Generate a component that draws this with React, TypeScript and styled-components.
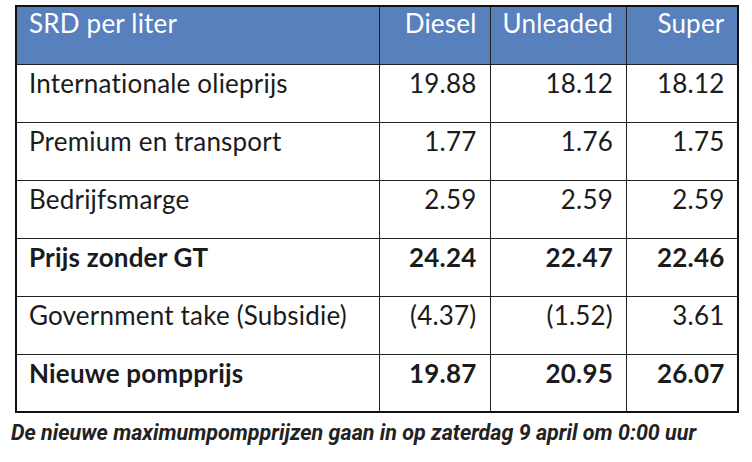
import React from 'react';
import styled, { createGlobalStyle } from 'styled-components';

const GlobalStyle = createGlobalStyle`
  html, body {
    margin: 0;
    padding: 0;
    background: #ffffff;
  }
`;

const Page = styled.div`
  width: 752px;
  height: 462px;
  padding: 5px 0 0 15px;
  box-sizing: border-box;
  background: #ffffff;
`;

const PriceTable = styled.table`
  border-collapse: collapse;
  border: 2px solid #111;
  font-family: Lato, "Open Sans", sans-serif;
  font-size: 26px;
  line-height: 30px;
  letter-spacing: 0.2px;
  font-variant-ligatures: none;
  color: #1b1b1b;
  table-layout: fixed;
`;

const HeadCell = styled.th<{ $align?: 'left' | 'right' }>`
  background: #5780bc;
  color: #ffffff;
  font-weight: 400;
  text-align: ${(p) => p.$align ?? 'right'};
  vertical-align: top;
  height: 58px;
  padding: 1px 13px 0 12px;
  box-sizing: border-box;
  border-left: 1.5px solid #222;
`;

const Cell = styled.td<{ $bold?: boolean; $align?: 'left' | 'right' }>`
  font-weight: ${(p) => (p.$bold ? 700 : 400)};
  text-align: ${(p) => p.$align ?? 'right'};
  vertical-align: top;
  height: 58px;
  padding: 3px 13px 0 12px;
  box-sizing: border-box;
  border: 1.5px solid #222;
`;

const Caption = styled.div`
  margin: 7px 0 0 -4px;
  font-family: Roboto, "Liberation Sans", sans-serif;
  font-weight: 700;
  font-style: italic;
  font-size: 21.5px;
  line-height: 25px;
  color: #222;
`;

const rows = [
  { label: 'Internationale olieprijs', values: ['19.88', '18.12', '18.12'] },
  { label: 'Premium en transport', values: ['1.77', '1.76', '1.75'] },
  { label: 'Bedrijfsmarge', values: ['2.59', '2.59', '2.59'] },
  { label: 'Prijs zonder GT', values: ['24.24', '22.47', '22.46'], bold: true },
  { label: 'Government take (Subsidie)', values: ['(4.37)', '(1.52)', '3.61'] },
  { label: 'Nieuwe pompprijs', values: ['19.87', '20.95', '26.07'], bold: true },
];

const widths = [363, 111, 136, 112];

const App: React.FC = () => {
  return (
    <Page>
      <GlobalStyle />
      <PriceTable>
        <colgroup>
          {widths.map((w, i) => (
            <col key={i} style={{ width: w }} />
          ))}
        </colgroup>
        <thead>
          <tr>
            <HeadCell $align="left">SRD per liter</HeadCell>
            <HeadCell>Diesel</HeadCell>
            <HeadCell>Unleaded</HeadCell>
            <HeadCell>Super</HeadCell>
          </tr>
        </thead>
        <tbody>
          {rows.map((r) => (
            <tr key={r.label}>
              <Cell $align="left" $bold={r.bold}>{r.label}</Cell>
              {r.values.map((v, i) => (
                <Cell key={i} $bold={r.bold}>{v}</Cell>
              ))}
            </tr>
          ))}
        </tbody>
      </PriceTable>
      <Caption>De nieuwe maximumpompprijzen gaan in op zaterdag 9 april om 0:00 uur</Caption>
    </Page>
  );
};

export default App;
